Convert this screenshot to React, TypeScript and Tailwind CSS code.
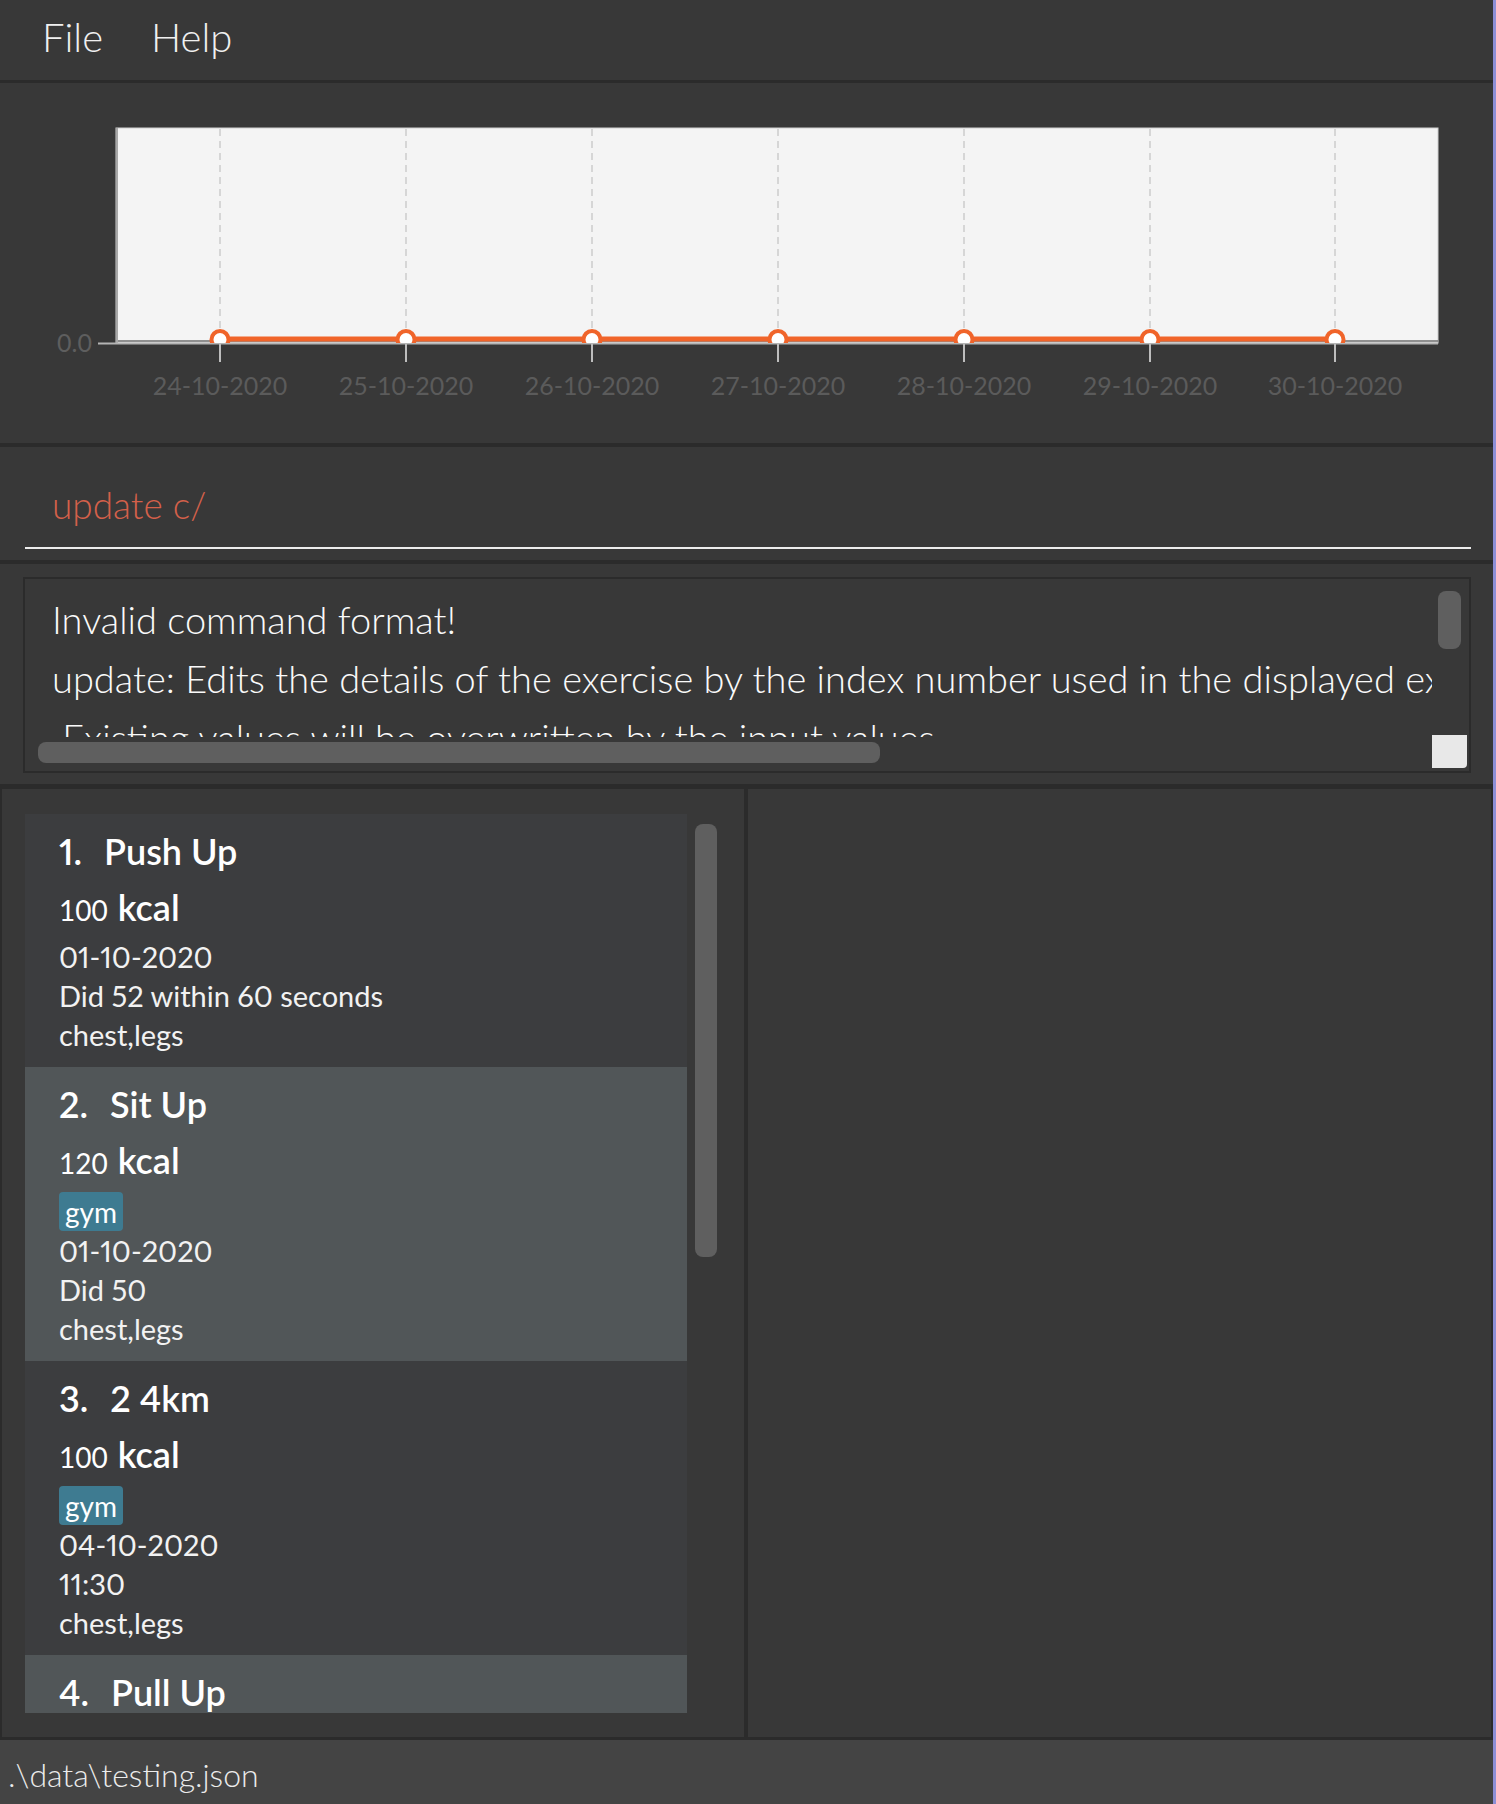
import React from 'react';

const dates = ['24-10-2020', '25-10-2020', '26-10-2020', '27-10-2020', '28-10-2020', '29-10-2020', '30-10-2020'];
const xs = [220, 406, 592, 778, 964, 1150, 1335];

const exercises = [
    { name: 'Push Up', kcal: 100, tag: null, date: '01-10-2020', desc: 'Did 52 within 60 seconds', muscles: 'chest,legs' },
    { name: 'Sit Up', kcal: 120, tag: 'gym', date: '01-10-2020', desc: 'Did 50', muscles: 'chest,legs' },
    { name: '2 4km', kcal: 100, tag: 'gym', date: '04-10-2020', desc: '11:30', muscles: 'chest,legs' },
    { name: 'Pull Up', kcal: 100, tag: null, date: '05-10-2020', desc: 'Did 10', muscles: 'back' },
];

const CaloriesChart = () => (
    <svg width="1493" height="360" viewBox="0 83 1493 360" fontFamily="Lato, sans-serif">
        <defs>
            <clipPath id="plot">
                <rect x="116" y="128" width="1322" height="215" />
            </clipPath>
        </defs>
        <rect x="116" y="128" width="1322" height="215" fill="#f4f4f4" stroke="#cfcfcf" strokeWidth="1" />
        <line x1="117" y1="128" x2="117" y2="343" stroke="#a8a8a8" strokeWidth="2" />
        {xs.map((x) => (
            <line key={x} x1={x} y1="129" x2={x} y2="342" stroke="#d6d6d6" strokeWidth="2" strokeDasharray="7 5" />
        ))}
        <line x1="118" y1="341" x2="1438" y2="341" stroke="#6e6e6e" strokeWidth="1.5" />
        <line x1="98" y1="343.5" x2="1438" y2="343.5" stroke="#b4b4b4" strokeWidth="2" />
        {xs.map((x) => (
            <line key={'t' + x} x1={x} y1="344" x2={x} y2="362" stroke="#bdbdbd" strokeWidth="2" />
        ))}
        <g clipPath="url(#plot)">
            <line x1={xs[0]} y1="339" x2={xs[6]} y2="339" stroke="#f0642a" strokeWidth="5" />
            {xs.map((x) => (
                <circle key={'c' + x} cx={x} cy="339.5" r="8.5" fill="#ffffff" stroke="#f0642a" strokeWidth="4" />
            ))}
        </g>
        <text x="92" y="352" textAnchor="end" fontSize="25" fill="#5e5e5e">0.0</text>
        {dates.map((d, i) => (
            <text key={d} x={xs[i]} y="395" textAnchor="middle" fontSize="25" fill="#5b5b5b">{d}</text>
        ))}
    </svg>
);

const ExerciseCard = ({ ex, index }: { ex: typeof exercises[number]; index: number }) => (
    <div className={`${index % 2 === 0 ? 'bg-[#3c3d3f]' : 'bg-[#515658]'} shrink-0 pl-[34px] pt-[12px] pb-[13px] text-white`}>
        <div className="h-[50px] whitespace-nowrap text-[36px] font-semibold leading-[50px] proportional-nums">
            <span>{index + 1}.</span>
            <span className="ml-[22px]">{ex.name}</span>
        </div>
        <div className="mt-[6px] flex h-[50px] items-baseline whitespace-nowrap">
            <span className="text-[28px] leading-[50px]">{ex.kcal}</span>
            <span className="ml-[10px] text-[36px] font-semibold leading-[50px]">kcal</span>
        </div>
        {ex.tag ? (
            <div className="mt-[7px] flex">
                <span className="flex h-[39px] items-center rounded-[4px] bg-[#3e7b91] px-[6px] text-[28px] leading-none">{ex.tag}</span>
            </div>
        ) : (
            <div className="h-[5px]" />
        )}
        <div className="text-[29px] leading-[39px] text-[#f2f2f2] proportional-nums">
            <div>{ex.date}</div>
            <div>{ex.desc}</div>
            <div>{ex.muscles}</div>
        </div>
    </div>
);

export default function App() {
    return (
        <div className="flex h-[1804px] w-[1496px] flex-col overflow-hidden border-r-[3px] border-[#8d8fd6] bg-[#383838] font-['Lato',sans-serif] text-white">
            {/* menu bar */}
            <div className="flex h-[83px] shrink-0 gap-[48px] border-b-[3px] border-[#2b2b2b] pl-[42px] text-[40px] font-light leading-[75px] text-[#f0f0f0]">
                <span>File</span>
                <span>Help</span>
            </div>

            {/* chart */}
            <div className="h-[364px] shrink-0 overflow-hidden border-b-4 border-[#2b2b2b]">
                <CaloriesChart />
            </div>

            {/* command box */}
            <div className="h-[117px] shrink-0 border-b-4 border-[#2b2b2b] pl-[25px] pr-[22px] pt-[20px]">
                <div className="h-[82px] border-b-2 border-[#ececec] pl-[27px] text-[37px] font-light leading-[76px] text-[#d4604a]">
                    update c/
                </div>
            </div>

            {/* result display */}
            <div className="h-[225px] shrink-0 border-b-[5px] border-[#2b2b2b] pl-[23px] pr-[22px] pt-[13px]">
                <div className="grid h-[196px] grid-cols-[1fr_37px] grid-rows-[158px_1fr] border-2 border-[#2b2b2b]">
                    <div className="overflow-hidden whitespace-pre pl-[27px] pt-[11px] text-[38px] font-light leading-[59px] text-[#fafafa]">
                        <div>Invalid command format!</div>
                        <div>update: Edits the details of the exercise by the index number used in the displayed exercise list.</div>
                        <div> Existing values will be overwritten by the input values.</div>
                    </div>
                    <div className="pl-[6px] pt-[12px]">
                        <div className="h-[58px] w-[23px] rounded-[8px] bg-[#5f5f5f]" />
                    </div>
                    <div className="pl-[13px] pt-[5px]">
                        <div className="h-[21px] w-[842px] rounded-[8px] bg-[#5f5f5f]" />
                    </div>
                    <div className="-mt-[2px]">
                        <div className="h-[33px] w-[35px] rounded-br-[4px] bg-[#e8e8e8]" />
                    </div>
                </div>
            </div>

            {/* lists */}
            <div className="flex min-h-0 flex-1 border-b-[3px] border-[#2b2b2b]">
                <div className="flex w-[746px] shrink-0 border-x-2 border-[#2b2b2b] pb-[24px] pl-[23px] pt-[25px]">
                    <div className="flex w-[662px] flex-col overflow-hidden">
                        {exercises.map((ex, i) => (
                            <ExerciseCard key={i} ex={ex} index={i} />
                        ))}
                    </div>
                    <div className="ml-[8px] mt-[10px] h-[433px] w-[22px] rounded-[8px] bg-[#5f5f5f]" />
                </div>
                <div className="flex-1 border-x-2 border-[#2b2b2b]" />
            </div>

            {/* status bar */}
            <div className="h-[64px] shrink-0 overflow-hidden bg-[#444444] pl-[8px] text-[32px] font-light leading-[70px] text-[#ececec]">
                .\data\testing.json
            </div>
        </div>
    );
}
